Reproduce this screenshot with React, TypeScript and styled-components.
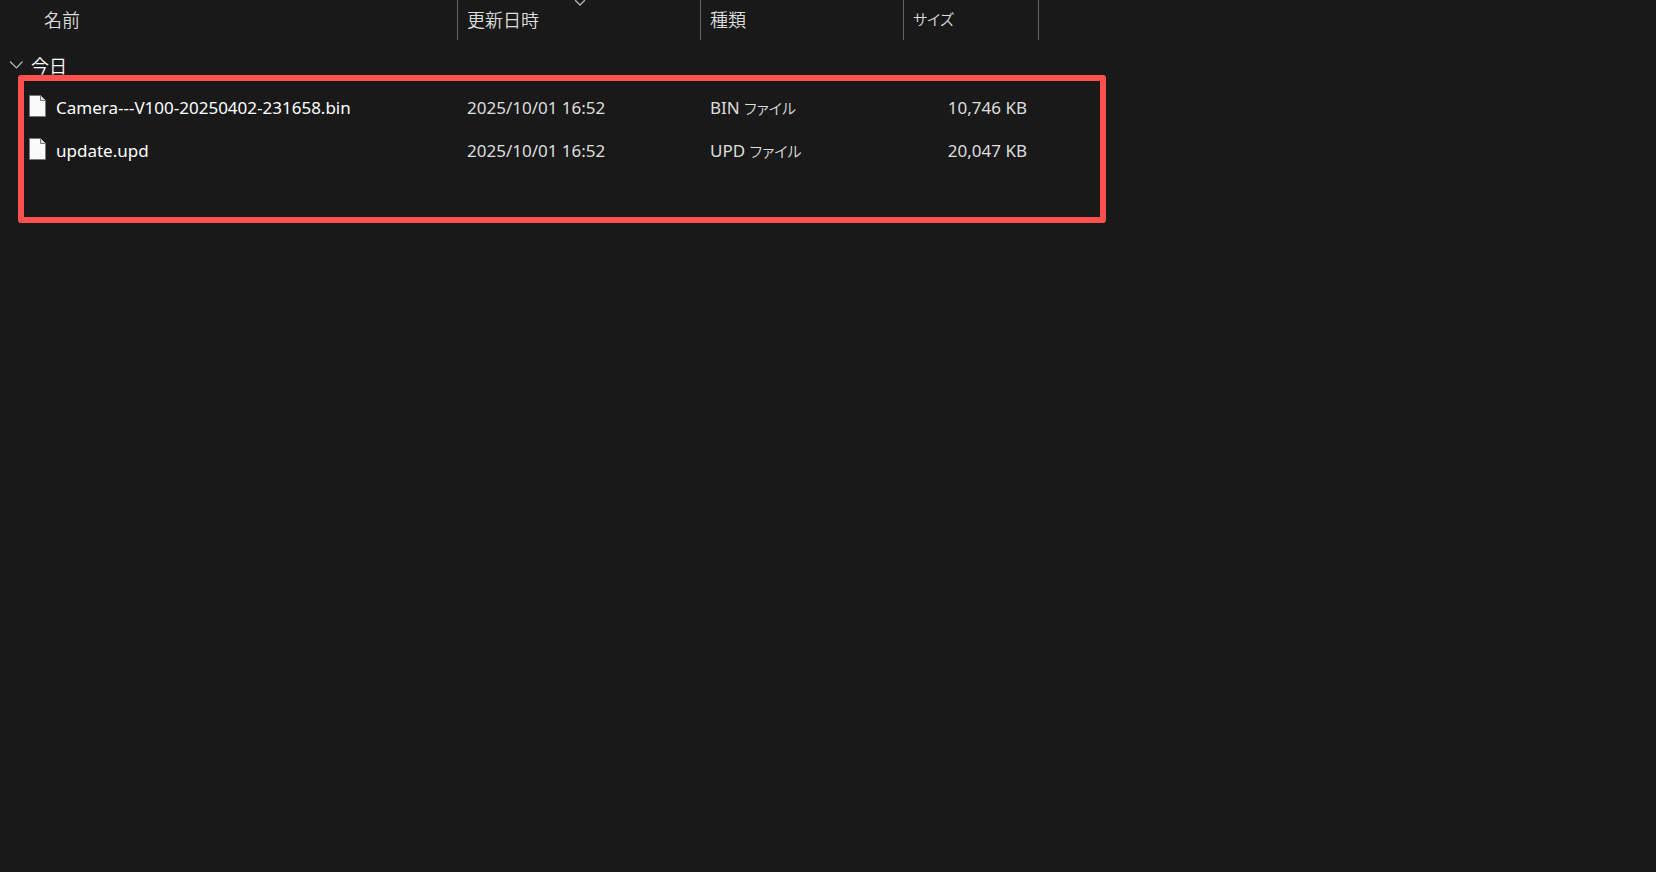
import React, { useState } from "react";
import styled, { createGlobalStyle } from "styled-components";

const GlobalStyle = createGlobalStyle`
  body {
    margin: 0;
    background: #191919;
    color: #dedede;
    font-family: "Noto Sans", "Noto Sans CJK JP", sans-serif;
    font-size: 17px;
    line-height: 24px;
  }
`;

const Listing = styled.main`
  position: relative;
  width: fit-content;
  min-height: 100vh;
  padding-right: 67px;
`;

const FileTable = styled.table`
  table-layout: fixed;
  width: 1039px;
  border-collapse: collapse;
`;

const Column = styled.col<{ $width: number }>`
  width: ${(p) => p.$width}px;
`;

const HeaderCell = styled.th`
  height: 40px;
  padding: 0;
  font-weight: inherit;
  box-shadow: inset -1px 0 #636363;
`;

const PlainButton = styled.button`
  display: flex;
  align-items: center;
  border: 0;
  background: none;
  color: inherit;
  font-family: "Noto Sans CJK JP", sans-serif;
  font-weight: 350;
  font-size: 18px;
  line-height: 24px;
  text-align: left;
`;

const HeaderButton = styled(PlainButton)<{ $indent?: number }>`
  position: relative;
  width: 100%;
  height: 40px;
  padding: 0 9px 2px ${(p) => p.$indent ?? 9}px;
`;

const SortMark = styled.svg`
  position: absolute;
  top: 0;
  left: 50%;
  transform: translateX(-50%);
`;

const GroupCell = styled.th`
  height: 46px;
  padding: 0;
  font-weight: inherit;
`;

const GroupButton = styled(PlainButton)`
  gap: 8px;
  height: 46px;
  padding: 3px 9px 0;
  color: #ffffff;
`;

const Cell = styled.td<{ $right?: boolean }>`
  height: 43px;
  padding: 0 ${(p) => (p.$right ? 12 : 9)}px 0 9px;
  text-align: ${(p) => (p.$right ? "right" : "left")};
  white-space: nowrap;
`;

const FileName = styled.span`
  display: flex;
  align-items: center;
  gap: 10px;
  padding-left: 20px;
  color: #ffffff;
`;

const Kana = styled.span`
  font-family: "Noto Sans CJK JP", sans-serif;
  font-weight: 350;
  font-size: 15px;
  font-feature-settings: "palt";
`;

const Highlight = styled.div`
  position: absolute;
  top: 75px;
  left: 18px;
  right: 0;
  height: 148px;
  box-sizing: border-box;
  border: 6px solid #ff5050;
  border-radius: 3px;
  pointer-events: none;
`;

const PageIcon = styled.svg`
  flex: none;
  margin-bottom: 4px;
`;

const FileIcon = () => (
  <PageIcon width="17" height="22" viewBox="0 0 17 22" aria-hidden="true">
    <path d="M.5.5H11.5L16.5 5.5V21.5H.5Z" fill="#fafafa" stroke="#777" />
    <path d="M11.5.5V5.5H16.5" fill="#dcdcdc" stroke="#777" />
  </PageIcon>
);

const files = [
  { name: "Camera---V100-20250402-231658.bin", date: "2025/10/01 16:52", ext: "BIN", size: "10,746 KB" },
  { name: "update.upd", date: "2025/10/01 16:52", ext: "UPD", size: "20,047 KB" },
];

export default function App() {
  const [open, setOpen] = useState(true);
  return (
    <>
      <GlobalStyle />
      <Listing>
        <FileTable>
          <colgroup>
            <Column $width={458} />
            <Column $width={243} />
            <Column $width={203} />
            <Column $width={135} />
          </colgroup>
          <thead>
            <tr>
              <HeaderCell scope="col">
                <HeaderButton $indent={44}>名前</HeaderButton>
              </HeaderCell>
              <HeaderCell scope="col" aria-sort="descending">
                <HeaderButton>
                  更新日時
                  <SortMark width="11" height="6" viewBox="0 0 11 6" aria-hidden="true">
                    <path d="M.5 0L5.5 5L10.5 0" fill="none" stroke="#b8b8b8" strokeWidth="1.3" />
                  </SortMark>
                </HeaderButton>
              </HeaderCell>
              <HeaderCell scope="col">
                <HeaderButton>種類</HeaderButton>
              </HeaderCell>
              <HeaderCell scope="col">
                <HeaderButton>
                  <Kana>サイズ</Kana>
                </HeaderButton>
              </HeaderCell>
            </tr>
          </thead>
          <tbody>
            <tr>
              <GroupCell colSpan={4} scope="rowgroup">
                <GroupButton aria-expanded={open} onClick={() => setOpen(!open)}>
                  <svg width="14" height="8" viewBox="0 0 14 8" aria-hidden="true">
                    <path d="M1 .5L7.5 7L13.5 .5" fill="none" stroke="#b8b8b8" strokeWidth="1.2" />
                  </svg>
                  今日
                </GroupButton>
              </GroupCell>
            </tr>
            {open &&
              files.map((file) => (
                <tr key={file.name}>
                  <Cell>
                    <FileName>
                      <FileIcon />
                      {file.name}
                    </FileName>
                  </Cell>
                  <Cell>{file.date}</Cell>
                  <Cell>
                    {file.ext} <Kana>ファイル</Kana>
                  </Cell>
                  <Cell $right>{file.size}</Cell>
                </tr>
              ))}
          </tbody>
        </FileTable>
        <Highlight />
      </Listing>
    </>
  );
}
